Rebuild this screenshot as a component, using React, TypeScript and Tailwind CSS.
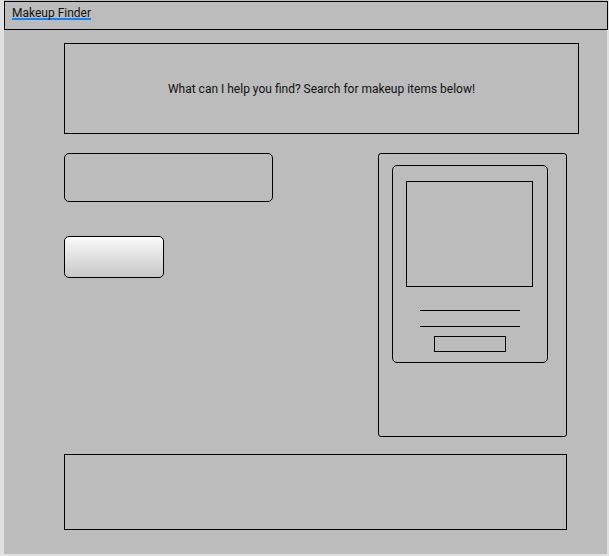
import React from "react";

export default function App() {
  return (
    <div className="w-[609px] h-[556px] bg-[#e0e0e0] pl-[4px] overflow-hidden" style={{ fontFamily: "Roboto, 'Liberation Sans', sans-serif" }}>
      <div className="w-[603px] h-[554px] bg-[#bcbcbc] pt-[1px]">
        <div className="w-[604px] h-[29px] border border-black flex items-start pl-[7px] pt-[6px]">
          <span className="text-[12px] leading-[10px] text-[#111] border-b-2 border-[#0a84ff]">Makeup Finder</span>
        </div>
        <div className="ml-[60px] mt-[13px] w-[515px] h-[91px] border border-black flex items-center justify-center">
          <span className="text-[12px] text-[#111]">What can I help you find? Search for makeup items below!</span>
        </div>
        <div className="flex mt-[19px] ml-[60px]">
          <div className="w-[314px] flex flex-col items-start">
            <div className="w-[209px] h-[49px] border border-black rounded-[5px]"></div>
            <div className="mt-[34px] w-[100px] h-[42px] border border-black rounded-[5px] bg-gradient-to-b from-[#fafafa] to-[#c8c8c8]"></div>
          </div>
          <div className="w-[189px] h-[284px] border border-black rounded-[3px] pl-[13px] pt-[11px]">
            <div className="w-[156px] h-[198px] border border-black rounded-[5px] flex flex-col items-start pt-[15px]">
              <div className="ml-[13px] w-[127px] h-[106px] border border-black"></div>
              <div className="ml-[27px] mt-[23px] w-[100px] h-[1px] bg-black"></div>
              <div className="ml-[27px] mt-[15px] w-[100px] h-[1px] bg-black"></div>
              <div className="ml-[41px] mt-[9px] w-[72px] h-[16px] border border-black"></div>
            </div>
          </div>
        </div>
        <div className="ml-[60px] mt-[17px] w-[503px] h-[76px] border border-black"></div>
      </div>
    </div>
  );
}
